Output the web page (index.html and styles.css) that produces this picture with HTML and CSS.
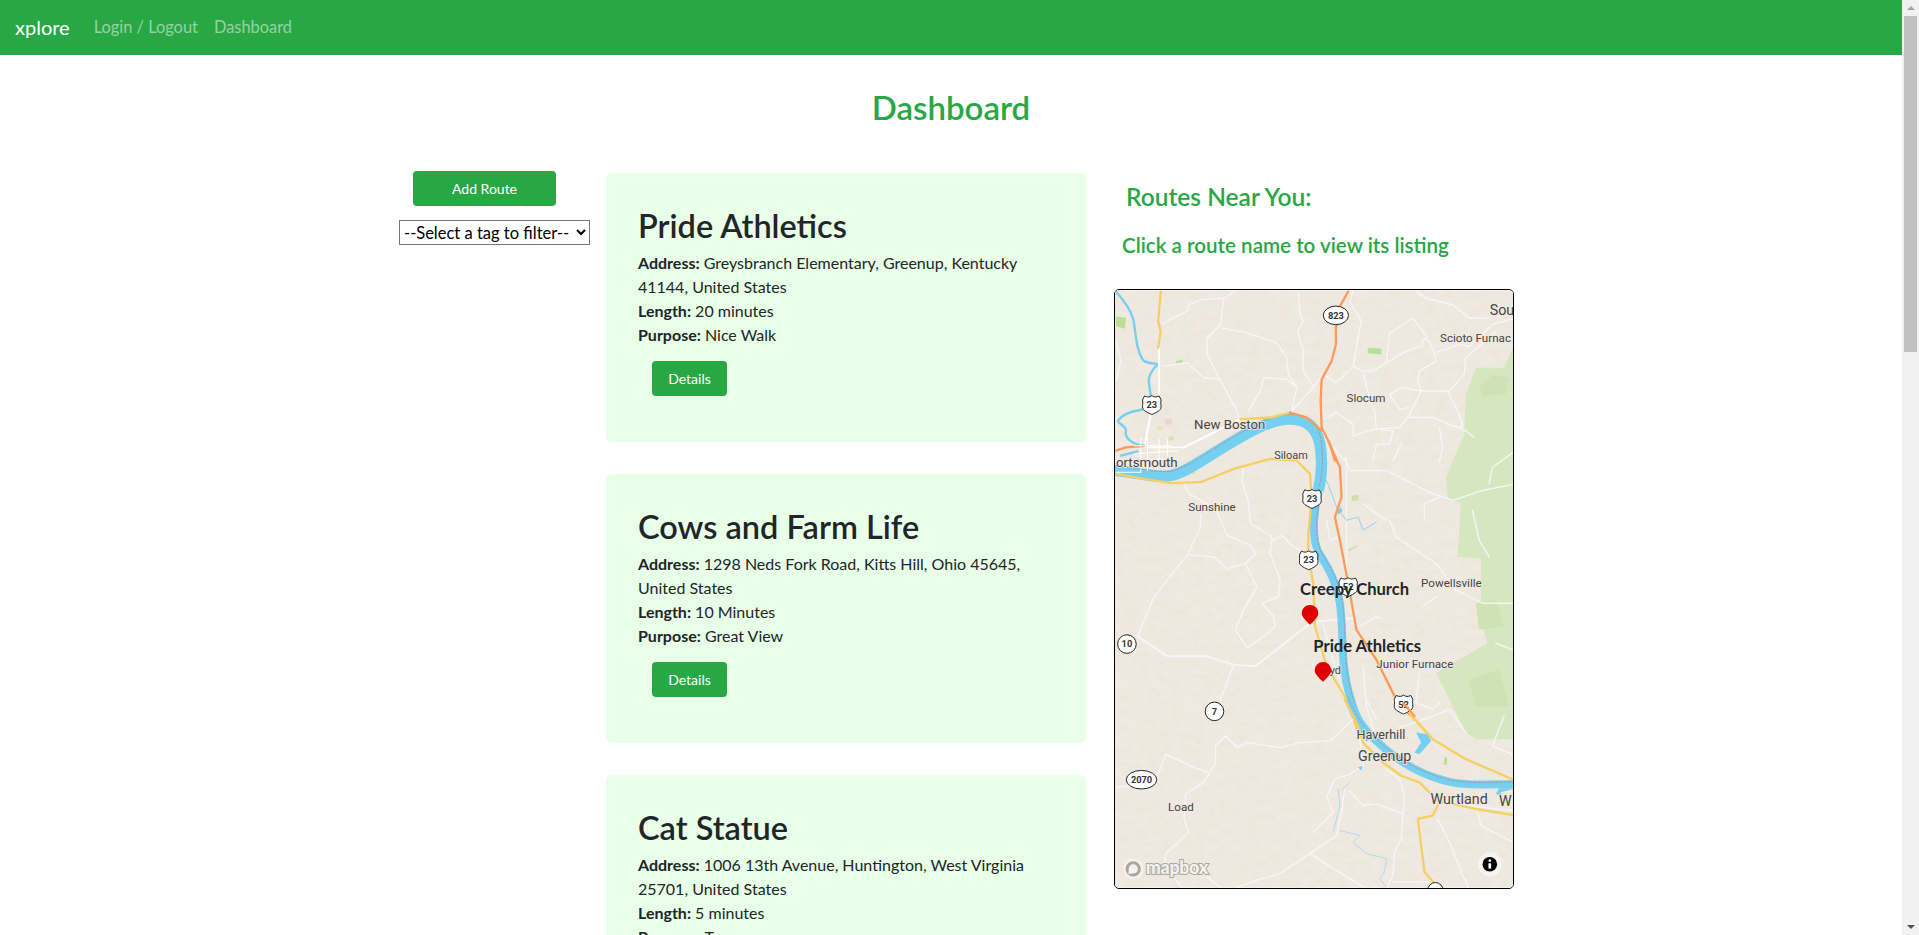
FILE: index.html
```html
<!DOCTYPE html>
<html lang="en">
<head>
    <meta charset="UTF-8">
    <title>xplore Dashboard</title>
    <link rel="stylesheet" href="styles.css">
</head>
<body>
    <div class="page">
        <nav class="navbar">
            <a class="brand">xplore</a>
            <a class="nav-link">Login / Logout</a>
            <a class="nav-link">Dashboard</a>
        </nav>
        <h1 class="page-title">Dashboard</h1>
        <div class="columns">
            <aside class="filters">
                <button class="btn btn-wide">Add Route</button>
                <select class="tag-select"><option>--Select a tag to filter--</option></select>
            </aside>
            <main class="routes">
                <section class="card">
                    <h2>Pride Athletics</h2>
                    <p><b>Address:</b> Greysbranch Elementary, Greenup, Kentucky 41144, United States</p>
                    <p><b>Length:</b> 20 minutes</p>
                    <p><b>Purpose:</b> Nice Walk</p>
                    <button class="btn btn-small">Details</button>
                </section>
                <section class="card">
                    <h2>Cows and Farm Life</h2>
                    <p><b>Address:</b> 1298 Neds Fork Road, Kitts Hill, Ohio 45645, United States</p>
                    <p><b>Length:</b> 10 Minutes</p>
                    <p><b>Purpose:</b> Great View</p>
                    <button class="btn btn-small">Details</button>
                </section>
                <section class="card">
                    <h2>Cat Statue</h2>
                    <p><b>Address:</b> 1006 13th Avenue, Huntington, West Virginia 25701, United States</p>
                    <p><b>Length:</b> 5 minutes</p>
                    <p><b>Purpose:</b> Tour</p>
                    <button class="btn btn-small">Details</button>
                </section>
            </main>
            <aside class="near">
                <h3>Routes Near You:</h3>
                <h4>Click a route name to view its listing</h4>
                <div class="map">
                    <svg class="map-svg" viewBox="0 0 1200 1800">
                        <defs>
                            <filter id="hills" x="0" y="0" width="100%" height="100%">
                                <feTurbulence type="fractalNoise" baseFrequency=".03 .045" numOctaves="3" seed="11"/>
                                <feColorMatrix values="0 0 0 0 .84  0 0 0 0 .78  0 0 0 0 .68  2.8 0 0 0 -1.2"/>
                            </filter>
                            <path id="shield" d="M-22,-27 C-14,-23 -6,-23 0,-28 C6,-23 14,-23 22,-27 L28,-15 C26,-7 28,0 28,6 C28,18 10,24 0,29 C-10,24 -28,18 -28,6 C-28,0 -26,-7 -28,-15 Z"/>
                            <path id="pin" d="M0,35 C-15,20 -25,10 -25,0 A25,25 0 1 1 25,0 C25,10 15,20 0,35 Z"/>
                            <path id="river-top" d="M-10,925 C100,930 160,955 210,945 C260,935 330,880 410,835 C470,800 520,775 570,775 C620,775 650,800 660,850 C668,900 665,950 655,990"/>
                            <path id="river-mid" d="M655,150 C640,230 635,290 655,335 C690,390 710,430 720,490 C730,560 725,640 735,700 C745,770 775,860 810,900"/>
                            <path id="river-low" d="M745,0 C765,50 790,90 830,125 C880,175 950,220 1020,240 C1070,258 1120,258 1250,255"/>
                        </defs>

                        <rect width="1200" height="1800" fill="#efe9e1"/>
                        <rect width="1200" height="1800" filter="url(#hills)" opacity=".7"/>

                        <!-- top part, coordinates from the upper crop -->
                        <g transform="translate(-42,-387)">
                            <path class="park" d="M1250,540 L1215,620 L1130,620 L1100,700 L1090,900 L1250,900 Z"/>
                            <path class="park-dark" d="M1140,680 L1180,640 L1230,650 L1220,700 L1150,705 Z"/>
                            <g fill="#b5e096">
                                <path d="M45,465 L75,470 L72,502 L45,495 Z"/>
                                <path d="M805,560 L845,562 L845,580 L803,576 Z"/>
                                <path d="M225,600 L245,596 L246,603 L226,606 Z"/>
                            </g>
                            <g class="road-minor">
                                <path d="M185,490 L215,470 L260,450 L265,430 L300,415 L370,410 L405,390"/>
                                <path d="M370,410 L360,490 L320,530 L320,580 L350,640 L410,750 L415,770"/>
                                <path d="M365,500 L440,515 L500,535 L530,545 L560,590 L565,640 L590,680 L575,750"/>
                                <path d="M595,390 L600,460 L610,480 L592,510 L610,570 L610,630 L640,675"/>
                                <path d="M185,615 L260,605 L310,650 L355,655"/>
                                <path d="M445,750 L480,690 L490,650 L560,655 L590,680"/>
                                <path d="M575,750 L640,680 L670,640 L710,665 L760,615 L790,630 L820,630 L860,605 L920,570 L965,555 L975,530 L990,540 L1005,575 L1080,550 L1110,555 L1180,490 L1250,470"/>
                                <path d="M760,615 L780,500 L785,480 L750,420 L760,390"/>
                                <path d="M860,605 L870,515 L940,470 L985,530"/>
                                <path d="M790,630 L810,720 L825,750 L830,805 L880,810 L870,850 L830,850 L820,900"/>
                                <path d="M950,390 L980,410 L1060,430 L1110,470 L1170,470"/>
                                <path d="M1005,575 L1010,600 L960,630 L955,660 L965,690 L1050,690 L1095,640 L1100,590 L1140,555 L1190,510"/>
                                <path d="M965,690 L925,770 L900,800 L830,805"/>
                                <path d="M925,770 L1000,770 L1060,795 L1090,800 L1080,760 L1045,690"/>
                                <path d="M965,690 L905,680 L870,700 L900,745 L925,740"/>
                                <path d="M660,780 L710,755 L760,790 L760,825 L825,805"/>
                                <path d="M1060,795 L1100,810 L1160,860 L1250,880"/>
                                <path d="M1020,800 L1030,860 L1020,900"/>
                                <path d="M905,850 L880,900"/>
                                <path d="M700,860 L735,900"/>
                                <path d="M45,540 L60,600 L45,660"/>
                            </g>
                            <g class="patch">
                                <path fill="#ecd3cf" d="M192,775 L214,775 L216,790 L195,792 Z"/>
                                <path fill="#eadfae" d="M168,797 L186,797 L186,806 L168,806 Z"/>
                                <path fill="#d9dfae" d="M204,828 L218,826 L218,838 L204,840 Z"/>
                            </g>
                            <g class="stream stream-wide">
                                <path d="M45,390 C70,420 95,450 100,490 C105,530 110,580 130,600 C150,610 165,605 170,610 C150,630 140,650 145,670 L150,705"/>
                                <path d="M130,745 C100,750 70,755 50,780 C60,795 75,795 75,810 C70,830 90,850 130,855"/>
                                <path d="M60,885 L110,872"/>
                            </g>
                            <use href="#river-top" class="river river-wide"/>
                            <use href="#river-top" class="border-line" transform="translate(3,-14)"/>
                            <g class="road-main">
                                <path d="M175,560 L175,700 L150,760 L130,860 L250,860 L350,810 L420,775"/>
                            </g>
                            <g class="road-yellow">
                                <path d="M180,390 L172,480 L180,510 L172,560"/>
                                <path d="M420,775 L510,770 L570,755"/>
                            </g>
                            <g class="road-orange">
                                <path d="M745,390 L720,435 L708,500 L708,550 L695,600 L665,655 L662,720 L665,800 L690,850 L705,900"/>
                                <path d="M570,755 L620,770 L665,810"/>
                                <path d="M45,870 L75,860 L130,855"/>
                            </g>
                            <ellipse class="route-badge" cx="708" cy="462" rx="38" ry="28"/>
                            <text class="badge-text" x="708" y="472">823</text>
                            <use href="#shield" class="route-badge" x="153" y="732"/>
                            <text class="badge-text" x="153" y="742">23</text>
                            <text class="map-label map-label-large" x="1172" y="461">Sou</text>
                            <text class="map-label" x="1022" y="541">Scioto Furnac</text>
                            <text class="map-label" x="740" y="722">Slocum</text>
                            <text class="map-label map-label-big" x="280" y="804">New Boston</text>
                            <text class="map-label map-label-large" x="1225" y="882">L</text>
                        </g>

                        <!-- middle part, coordinates from the middle crop -->
                        <g transform="translate(-42,453)">
                            <path class="park" d="M1090,-10 L1040,110 L1045,170 L1085,190 L1075,350 L1145,355 L1145,540 L1165,610 L1010,700 L1100,880 L1130,900 L1250,900 L1250,-10 Z"/>
                            <path class="park-dark" d="M1130,490 L1190,480 L1215,560 L1140,570 Z"/>
                            <path class="park-dark" d="M1110,720 L1200,690 L1230,800 L1130,800 Z"/>
                            <g fill="#cfe0aa">
                                <path d="M755,165 L775,162 L775,180 L757,182 Z"/>
                                <path d="M745,328 L770,315 L772,320 L748,334 Z"/>
                            </g>
                            <path fill="#b5e096" d="M272,96 L282,94 L280,102 Z"/>
                            <g class="road-minor">
                                <path d="M430,85 L425,120 L445,190 L450,250 L510,285 L520,300 L545,285 L580,320 L600,330"/>
                                <path d="M515,300 L510,340 L540,420 L535,470 L485,490 L520,530 L525,560 L490,590 L440,625 L405,570 L430,510 L470,440 L435,370 L465,340 L450,315 L380,285 L345,205 L265,160 L250,130"/>
                                <path d="M300,220 L300,260 L260,345 L160,470 L110,590"/>
                                <path d="M260,345 L340,350 L380,385 L435,370"/>
                                <path d="M400,675 L360,780"/>
                                <path d="M735,50 L750,90 L860,90 L1000,160 L1060,180 L1150,150 L1250,130"/>
                                <path d="M740,50 L740,400"/>
                                <path d="M680,240 L690,300 L720,290"/>
                                <path d="M870,240 L890,290 L1010,370 L1070,450 L1150,490 L1250,490"/>
                                <path d="M1120,210 L1140,300 L1170,350"/>
                                <path d="M1020,170 L975,190 L975,240"/>
                                <path d="M790,190 L860,240"/>
                                <path d="M1250,30 L1180,80 L1170,130"/>
                                <path d="M780,560 L830,530 L845,535"/>
                                <path d="M790,680 L800,800 L830,900"/>
                                <path d="M960,700 L950,790 L1000,810 L1020,790"/>
                                <path d="M1010,470 L970,500"/>
                                <path d="M1190,610 L1240,630"/>
                                <path d="M670,555 L710,700 L720,720"/>
                            </g>
                            <path class="road-minor road-wide" d="M110,590 L200,650 L320,650 L400,675 L465,680 L630,550"/>
                            <path class="road-minor road-wide" d="M650,545 L760,535"/>
                            <g class="stream">
                                <path d="M680,120 L695,160 L710,200 L740,240 L775,230 L790,270 L830,245"/>
                            </g>
                            <path class="lake" d="M712,215 L722,200 L728,212 L716,222 Z"/>
                            <use href="#river-mid" class="river"/>
                            <use href="#river-mid" class="border-line" transform="translate(8,0)"/>
                            <g class="road-yellow">
                                <path d="M45,100 L130,115 L210,128 L300,125 L400,85 L510,55 L590,60 L630,100 L635,170 L625,280 L625,350 L640,430 L645,560 L680,680 L740,780 L775,880"/>
                                <path d="M930,825 L1000,900"/>
                            </g>
                            <g class="road-orange">
                                <path d="M685,0 L720,80 L725,170 L705,230 L720,300 L745,430 L770,570 L830,660 L885,770 L930,825"/>
                            </g>
                            <g class="road-thin">
                                <path d="M120,-10 L120,95 M140,-10 L140,90 M175,-5 L175,60 M200,-5 L200,50"/>
                                <path d="M100,15 L210,15 M100,40 L230,30 M100,60 L200,55 M45,95 L120,95"/>
                            </g>
                            <text class="map-label map-label-big" x="45" y="80">ortsmouth</text>
                            <use href="#shield" class="route-badge" x="636" y="175"/>
                            <text class="badge-text" x="636" y="185">23</text>
                            <use href="#shield" class="route-badge" x="626" y="360"/>
                            <text class="badge-text" x="626" y="370">23</text>
                            <use href="#shield" class="route-badge" x="745" y="441"/>
                            <text class="badge-text" x="745" y="451">52</text>
                            <use href="#shield" class="route-badge" x="912" y="795"/>
                            <text class="badge-text" x="912" y="805">52</text>
                            <ellipse class="route-badge" cx="78" cy="613" rx="28" ry="28"/>
                            <text class="badge-text" x="78" y="623">10</text>
                            <ellipse class="route-badge" cx="342" cy="816" rx="28" ry="28"/>
                            <text class="badge-text" x="342" y="826">7</text>
                            <text class="map-label map-label-small" x="522" y="55">Siloam</text>
                            <text class="map-label" x="263" y="212">Sunshine</text>
                            <text class="map-label" x="965" y="441">Powellsville</text>
                            <text class="map-label" x="830" y="685">Junior Furnace</text>
                            <text class="map-label map-label-small" x="645" y="702">Lloyd</text>
                        </g>

                        <!-- bottom part, coordinates from the lower crop -->
                        <g transform="translate(-42,1233)">
                            <g class="road-minor">
                                <path d="M375,110 L410,145 L440,130 L540,145 L600,130 L690,125 L760,60"/>
                                <path d="M375,110 L345,140 L345,190 L310,250 L255,285 L250,360 L265,400 L195,465 L190,530"/>
                                <path d="M320,220 L270,200 L195,165 L170,230 L105,260 L45,265"/>
                                <path d="M640,400 L700,340 L680,295 L705,240 L750,225 L790,200 L780,120"/>
                                <path d="M750,275 L790,320 L830,315 L910,345 L915,290 L900,240 L860,210"/>
                                <path d="M910,345 L905,420 L885,460 L880,530 L860,570"/>
                                <path d="M735,270 L725,340 L710,410 L630,465 L540,525 L470,545 L400,570"/>
                                <path d="M630,465 L700,510 L800,570"/>
                                <path d="M1015,360 L1055,440 L1090,530 L1110,570"/>
                                <path d="M1135,340 L1145,380 L1250,435"/>
                                <path d="M880,550 L985,550"/>
                                <path d="M800,0 L830,60"/>
                                <path d="M1250,170 L1180,140 L1215,50"/>
                                <path d="M900,85 L1000,50 L1050,30 L1100,100"/>
                                <path d="M320,535 L365,570 M215,530 L245,570"/>
                                <path d="M1060,315 L1240,335"/>
                            </g>
                            <g class="stream stream-faint">
                                <path d="M720,395 L780,410 L760,430 L800,465 L860,480 L855,520 L840,540 L860,565"/>
                                <path d="M715,270 L720,320 L700,400"/>
                                <path d="M750,250 L730,270"/>
                            </g>
                            <path class="lake" d="M950,100 L985,105 L995,125 L960,165 L945,160 L965,130 Z"/>
                            <path class="lake" d="M775,205 L788,200 L785,215 Z"/>
                            <path class="lake" d="M1190,285 L1200,268 L1250,268 L1205,280 L1208,290 Z"/>
                            <path fill="#b5e096" d="M1035,175 L1044,175 L1042,197 L1033,197 Z"/>
                            <use href="#river-low" class="river"/>
                            <use href="#river-low" class="border-line" transform="translate(0,-6)"/>
                            <g class="road-yellow">
                                <path d="M735,0 L775,80 L790,130 L850,190 L905,230 L960,250 L1020,310 L1060,315 L1130,330 L1250,350"/>
                                <path d="M1020,310 L1000,350 L955,360 L965,440 L975,520 L1010,560"/>
                                <path d="M930,40 L1000,120 L1100,180 L1250,245"/>
                            </g>
                            <path class="road-orange" d="M910,10 L945,50"/>
                            <ellipse class="route-badge" cx="122" cy="242" rx="46" ry="28"/>
                            <text class="badge-text" x="122" y="252">2070</text>
                            <ellipse class="route-badge" cx="1008" cy="578" rx="24" ry="26"/>
                            <text class="map-label map-label-mid" x="770" y="120">Haverhill</text>
                            <text class="map-label map-label-large" x="775" y="187">Greenup</text>
                            <text class="map-label map-label-large" x="993" y="315">Wurtland</text>
                            <text class="map-label map-label-large" x="1200" y="322">W</text>
                            <text class="map-label" x="202" y="335">Load</text>

                            <circle cx="97" cy="511" r="27" fill="#a8a69e" stroke="#f4f2ee" stroke-width="8"/>
                            <circle cx="97" cy="511" r="14" fill="#f4f2ee"/>
                            <path d="M82,526 L84,511 L97,524 Z" fill="#f4f2ee"/>
                            <text class="logo-text" x="135" y="526" textLength="188">mapbox</text>

                            <circle cx="1172" cy="497" r="36" fill="#fff" opacity=".5"/>
                            <circle cx="1172" cy="497" r="22" fill="black"/>
                            <circle cx="1172" cy="486" r="4" fill="white"/>
                            <rect x="1168" y="494" width="8" height="16" fill="white"/>
                        </g>

                        <!-- route markers -->
                        <use href="#pin" class="marker" x="588" y="973"/>
                        <text class="marker-label" x="558" y="917">Creepy Church</text>
                        <use href="#pin" class="marker" x="627" y="1145"/>
                        <text class="marker-label" x="598" y="1091">Pride Athletics</text>
                    </svg>
                </div>
            </aside>
        </div>
    </div>
    <div class="scrollbar">
        <div class="arrow-up"></div>
        <div class="thumb"></div>
        <div class="arrow-down"></div>
    </div>
</body>
</html>
```
FILE: styles.css
```css
* {
    box-sizing: border-box;
}
html, body {
    margin: 0;
    height: 100%;
    overflow: hidden;
}
body {
    display: flex;
    font-family: Lato, "Noto Sans", sans-serif;
    font-size: 16px;
    line-height: 24px;
    color: #212529;
    background: white;
}
.page {
    flex: 1;
    min-width: 0;
    overflow: hidden;
}
.navbar {
    display: flex;
    align-items: center;
    height: 55px;
    padding: 0 15px 2px;
    background-color: #28a745;
}
.brand {
    color: white;
    font-size: 20px;
    margin-right: 24px;
}
.nav-link {
    color: rgba(255, 255, 255, 0.5);
    font-size: 16.4px;
    margin-right: 16px;
}
.page-title {
    margin: 33px 0 0;
    text-align: center;
    color: #28a745;
    font-size: 33px;
    line-height: 38px;
    font-weight: 600;
}
.columns {
    display: flex;
    margin-top: 47px;
    padding-left: 399px;
}
.filters {
    width: 207px;
}
.btn {
    display: block;
    background-color: #28a745;
    color: white;
    border: none;
    border-radius: 4px;
    font-family: inherit;
    font-size: 14px;
    height: 35px;
}
.btn-wide {
    width: 143px;
    margin: -2px 0 14px 14px;
}
.tag-select {
    display: block;
    width: 191px;
    height: 25px;
    font-family: inherit;
    font-size: 16.5px;
    background: white;
}
.routes {
    width: 480px;
}
.card {
    height: 269px;
    margin-bottom: 32px;
    padding: 34px 32px 0;
    background-color: #e8ffe8;
    border-radius: 6px;
}
.card h2 {
    margin: 0 0 6px;
    font-size: 32.5px;
    line-height: 38px;
    font-weight: 600;
}
.card p {
    margin: 0;
}
.btn-small {
    width: 75px;
    margin: 14px 0 0 14px;
}
.near {
    width: 400px;
    margin-left: 28px;
}
.near h3 {
    margin: 9px 0 0 12px;
    color: #28a745;
    font-size: 24.5px;
    line-height: 29px;
    font-weight: 600;
}
.near h4 {
    margin: 22px 0 0 8px;
    color: #28a745;
    font-size: 20.6px;
    line-height: 24px;
    font-weight: 600;
}
.map {
    position: relative;
    width: 400px;
    height: 600px;
    margin-top: 32px;
    border: 1px solid black;
    border-radius: 5px;
    overflow: hidden;
}
.map-svg {
    display: block;
    width: 100%;
    height: 100%;
}

/* map layers */
.road-minor, .road-main, .road-yellow, .road-orange, .road-thin, .stream, .river, .border-line {
    fill: none;
    stroke-linejoin: round;
    stroke-linecap: round;
}
.road-minor {
    stroke: #f6f6fa;
    stroke-width: 4;
}
.road-wide {
    stroke-width: 6;
}
.road-main {
    stroke: white;
    stroke-width: 6;
}
.road-thin {
    stroke: white;
    stroke-width: 3;
}
.road-yellow {
    stroke: #f6cf62;
    stroke-width: 7;
}
.road-orange {
    stroke: #fb9a5a;
    stroke-width: 7;
}
.park {
    fill: #d6e7c0;
}
.park-dark {
    fill: #cde3b3;
}
.stream {
    stroke: #8fd3f0;
    stroke-width: 3;
}
.stream-wide {
    stroke: #75cff0;
    stroke-width: 7;
}
.stream-faint {
    stroke: #a8dcf2;
    stroke-width: 3;
}
.river {
    stroke: #75cff0;
    stroke-width: 24;
    stroke-linecap: butt;
}
.river-wide {
    stroke-width: 34;
}
.border-line {
    stroke: #98a0ac;
    stroke-width: 3;
    stroke-dasharray: 10 3;
    stroke-linecap: butt;
}
.lake {
    fill: #75cff0;
}
.route-badge {
    fill: white;
    stroke: #222;
    stroke-width: 3;
}
.badge-text {
    font-family: Roboto, sans-serif;
    font-size: 28px;
    font-weight: 700;
    fill: #333;
    text-anchor: middle;
}
.map-label {
    font-family: Roboto, sans-serif;
    font-size: 35px;
    fill: #444;
    stroke: #efe9e1;
    stroke-width: 5;
    paint-order: stroke;
}
.map-label-small {
    font-size: 33px;
}
.map-label-mid {
    font-size: 38px;
}
.map-label-big {
    font-size: 40px;
}
.map-label-large {
    font-size: 43px;
}
.marker {
    fill: #e10000;
}
.marker-label {
    font-family: Lato, sans-serif;
    font-size: 50px;
    font-weight: 700;
    fill: #212529;
}
.logo-text {
    font-family: Lato, sans-serif;
    font-size: 54px;
    font-weight: 900;
    fill: #f4f2ee;
    stroke: #a8a69e;
    stroke-width: 6;
    paint-order: stroke;
}

.scrollbar {
    display: flex;
    flex-direction: column;
    align-items: center;
    width: 17px;
    background: #f1f1f1;
}
.arrow-up {
    width: 0;
    height: 0;
    margin: 6px 0 6px;
    border-left: 4px solid transparent;
    border-right: 4px solid transparent;
    border-bottom: 4px solid #a3a3a3;
}
.thumb {
    width: 13px;
    height: 336px;
    background: #c1c1c1;
}
.arrow-down {
    width: 0;
    height: 0;
    margin: auto 0 6px;
    border-left: 4px solid transparent;
    border-right: 4px solid transparent;
    border-top: 4px solid #505050;
}
```
